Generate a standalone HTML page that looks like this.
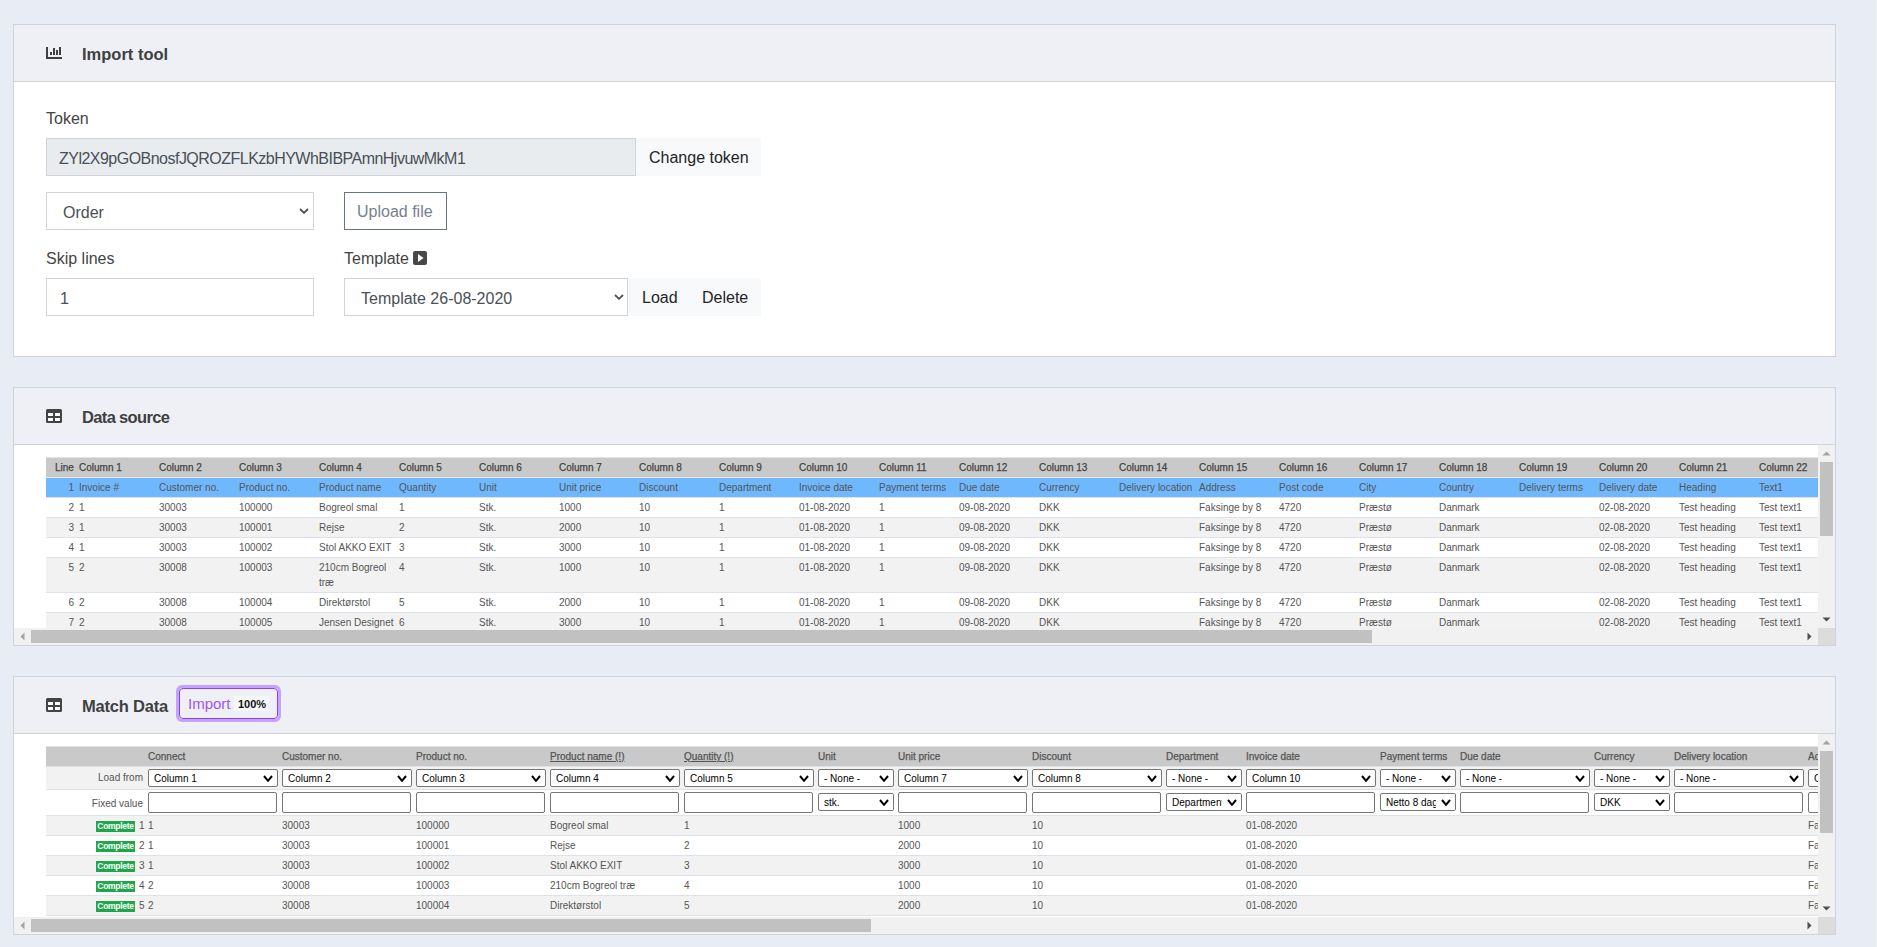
<!DOCTYPE html><html><head><meta charset="utf-8"><style>
*{margin:0;padding:0;box-sizing:border-box}
html,body{width:1877px;height:947px;overflow:hidden;background:#e8ecf4;font-family:"Liberation Sans",sans-serif;color:#333}
div{position:absolute}
.t{white-space:nowrap;line-height:15px;font-size:10px;color:#555}
.f{white-space:nowrap;font-size:16px;line-height:20px;color:#495057}
.card{background:#fff;border:1px solid #d2d3d6}
.ch{background:#eff0f5;border-bottom:1px solid #d2d3d6}
.ht{font-weight:bold;font-size:16.5px;line-height:20px;color:#404040;white-space:nowrap}
.sel{background:#fff;border:1px solid #767676;border-radius:2px}
.inp{background:#fff;border:1px solid #767676;border-radius:2px}
.st{white-space:nowrap;font-size:10px;line-height:14px;color:#000}
</style></head><body><div class="card" style="left:13px;top:24px;width:1823px;height:333px;"></div>
<div class="ch" style="left:14px;top:25px;width:1821px;height:57px;"></div>
<svg style="position:absolute;left:46px;top:47px" width="16" height="12" viewBox="0 0 16 12"><rect x="0" y="0" width="2" height="12" fill="#404040"/><rect x="0" y="10" width="16" height="2" fill="#404040"/><rect x="4" y="5" width="2" height="3" fill="#404040"/><rect x="7" y="1" width="2" height="7" fill="#404040"/><rect x="10" y="3" width="2" height="5" fill="#404040"/><rect x="13" y="0" width="2" height="8" fill="#404040"/></svg>
<div class="ht" style="left:82px;top:44px;">Import tool</div>
<div class="f" style="left:46px;top:109px;color:#444">Token</div>
<div style="left:46px;top:138px;width:590px;height:38px;background:#e9ecef;border:1px solid #ced4da"></div>
<div class="f" style="left:59px;top:149px;letter-spacing:-0.52px">ZYl2X9pGOBnosfJQROZFLKzbHYWhBIBPAmnHjvuwMkM1</div>
<div style="left:636px;top:138px;width:125px;height:38px;background:#f8f9fa"></div>
<div class="f" style="left:649px;top:148px;color:#212529">Change token</div>
<div style="left:46px;top:192px;width:268px;height:38px;background:#fff;border:1px solid #ced4da"></div>
<div class="f" style="left:63px;top:203px;">Order</div>
<svg style="position:absolute;left:299px;top:208px" width="10" height="6" viewBox="0 0 10 6"><polyline points="1,1 5.0,4.8 9,1" fill="none" stroke="#495057" stroke-width="1.8"/></svg>
<div style="left:344px;top:192px;width:103px;height:38px;background:#fff;border:1px solid #687389"></div>
<div class="f" style="left:357px;top:202px;color:#77808f">Upload file</div>
<div class="f" style="left:46px;top:249px;color:#444">Skip lines</div>
<div style="left:46px;top:278px;width:268px;height:38px;background:#fff;border:1px solid #ced4da"></div>
<div class="f" style="left:60px;top:289px;">1</div>
<div class="f" style="left:344px;top:249px;color:#444">Template</div>
<svg style="position:absolute;left:413px;top:251px" width="14" height="14" viewBox="0 0 14 14"><rect x="0" y="0" width="14" height="14" rx="2" fill="#474747"/><polygon points="5,3 10.5,7 5,11" fill="#fff"/></svg>
<div style="left:344px;top:278px;width:284px;height:38px;background:#fff;border:1px solid #ced4da"></div>
<div class="f" style="left:361px;top:289px;">Template 26-08-2020</div>
<svg style="position:absolute;left:614px;top:294px" width="10" height="6" viewBox="0 0 10 6"><polyline points="1,1 5.0,4.8 9,1" fill="none" stroke="#495057" stroke-width="1.8"/></svg>
<div style="left:628px;top:278px;width:133px;height:38px;background:#f8f9fa"></div>
<div class="f" style="left:642px;top:288px;color:#212529">Load</div>
<div class="f" style="left:702px;top:288px;color:#212529">Delete</div>
<div class="card" style="left:13px;top:387px;width:1823px;height:259px;"></div>
<div class="ch" style="left:14px;top:388px;width:1821px;height:57px;"></div>
<svg style="position:absolute;left:46px;top:409px" width="16" height="14" viewBox="0 0 16 14"><rect x="0" y="0" width="16" height="14" rx="1.5" fill="#444"/><rect x="2" y="4" width="5" height="3" fill="#fff"/><rect x="9" y="4" width="5" height="3" fill="#fff"/><rect x="2" y="9" width="5" height="3" fill="#fff"/><rect x="9" y="9" width="5" height="3" fill="#fff"/></svg>
<div class="ht" style="left:82px;top:407px;letter-spacing:-0.65px">Data source</div>
<div style="left:14px;top:445px;width:1804px;height:183px;overflow:hidden;background:#fff">
<div style="left:32px;top:13px;width:1972px;height:19px;background:#c9c9c9"></div>
<div style="left:32px;top:32px;width:1972px;height:1px;background:#e4e6e9"></div>
<div style="left:32px;top:33px;width:1972px;height:19px;background:#6fb8fd"></div>
<div style="left:32px;top:52px;width:1972px;height:1px;background:#dee2e6"></div>
<div style="left:32px;top:53px;width:1972px;height:19px;background:#fff"></div>
<div style="left:32px;top:72px;width:1972px;height:1px;background:#dee2e6"></div>
<div style="left:32px;top:73px;width:1972px;height:19px;background:#f2f2f2"></div>
<div style="left:32px;top:92px;width:1972px;height:1px;background:#dee2e6"></div>
<div style="left:32px;top:93px;width:1972px;height:19px;background:#fff"></div>
<div style="left:32px;top:112px;width:1972px;height:1px;background:#dee2e6"></div>
<div style="left:32px;top:113px;width:1972px;height:34px;background:#f2f2f2"></div>
<div style="left:32px;top:147px;width:1972px;height:1px;background:#dee2e6"></div>
<div style="left:32px;top:148px;width:1972px;height:19px;background:#fff"></div>
<div style="left:32px;top:167px;width:1972px;height:1px;background:#dee2e6"></div>
<div style="left:32px;top:168px;width:1972px;height:19px;background:#f2f2f2"></div>
<div style="left:32px;top:187px;width:1972px;height:1px;background:#dee2e6"></div>
<div style="left:32px;top:12px;width:1972px;height:1px;background:#dfe2e6"></div>
<div class="t" style="left:41px;top:15px;color:#444;-webkit-text-stroke:0.25px #444">Line</div>
<div class="t" style="left:65px;top:15px;color:#444;-webkit-text-stroke:0.25px #444">Column 1</div>
<div class="t" style="left:145px;top:15px;color:#444;-webkit-text-stroke:0.25px #444">Column 2</div>
<div class="t" style="left:225px;top:15px;color:#444;-webkit-text-stroke:0.25px #444">Column 3</div>
<div class="t" style="left:305px;top:15px;color:#444;-webkit-text-stroke:0.25px #444">Column 4</div>
<div class="t" style="left:385px;top:15px;color:#444;-webkit-text-stroke:0.25px #444">Column 5</div>
<div class="t" style="left:465px;top:15px;color:#444;-webkit-text-stroke:0.25px #444">Column 6</div>
<div class="t" style="left:545px;top:15px;color:#444;-webkit-text-stroke:0.25px #444">Column 7</div>
<div class="t" style="left:625px;top:15px;color:#444;-webkit-text-stroke:0.25px #444">Column 8</div>
<div class="t" style="left:705px;top:15px;color:#444;-webkit-text-stroke:0.25px #444">Column 9</div>
<div class="t" style="left:785px;top:15px;color:#444;-webkit-text-stroke:0.25px #444">Column 10</div>
<div class="t" style="left:865px;top:15px;color:#444;-webkit-text-stroke:0.25px #444">Column 11</div>
<div class="t" style="left:945px;top:15px;color:#444;-webkit-text-stroke:0.25px #444">Column 12</div>
<div class="t" style="left:1025px;top:15px;color:#444;-webkit-text-stroke:0.25px #444">Column 13</div>
<div class="t" style="left:1105px;top:15px;color:#444;-webkit-text-stroke:0.25px #444">Column 14</div>
<div class="t" style="left:1185px;top:15px;color:#444;-webkit-text-stroke:0.25px #444">Column 15</div>
<div class="t" style="left:1265px;top:15px;color:#444;-webkit-text-stroke:0.25px #444">Column 16</div>
<div class="t" style="left:1345px;top:15px;color:#444;-webkit-text-stroke:0.25px #444">Column 17</div>
<div class="t" style="left:1425px;top:15px;color:#444;-webkit-text-stroke:0.25px #444">Column 18</div>
<div class="t" style="left:1505px;top:15px;color:#444;-webkit-text-stroke:0.25px #444">Column 19</div>
<div class="t" style="left:1585px;top:15px;color:#444;-webkit-text-stroke:0.25px #444">Column 20</div>
<div class="t" style="left:1665px;top:15px;color:#444;-webkit-text-stroke:0.25px #444">Column 21</div>
<div class="t" style="left:1745px;top:15px;color:#444;-webkit-text-stroke:0.25px #444">Column 22</div>
<div class="t" style="left:1825px;top:15px;color:#444;-webkit-text-stroke:0.25px #444">Column 23</div>
<div class="t" style="left:32px;top:35px;width:28px;text-align:right">1</div>
<div class="t" style="left:65px;top:35px;">Invoice #</div>
<div class="t" style="left:145px;top:35px;">Customer no.</div>
<div class="t" style="left:225px;top:35px;">Product no.</div>
<div class="t" style="left:305px;top:35px;">Product name</div>
<div class="t" style="left:385px;top:35px;">Quantity</div>
<div class="t" style="left:465px;top:35px;">Unit</div>
<div class="t" style="left:545px;top:35px;">Unit price</div>
<div class="t" style="left:625px;top:35px;">Discount</div>
<div class="t" style="left:705px;top:35px;">Department</div>
<div class="t" style="left:785px;top:35px;">Invoice date</div>
<div class="t" style="left:865px;top:35px;">Payment terms</div>
<div class="t" style="left:945px;top:35px;">Due date</div>
<div class="t" style="left:1025px;top:35px;">Currency</div>
<div class="t" style="left:1105px;top:35px;">Delivery location</div>
<div class="t" style="left:1185px;top:35px;">Address</div>
<div class="t" style="left:1265px;top:35px;">Post code</div>
<div class="t" style="left:1345px;top:35px;">City</div>
<div class="t" style="left:1425px;top:35px;">Country</div>
<div class="t" style="left:1505px;top:35px;">Delivery terms</div>
<div class="t" style="left:1585px;top:35px;">Delivery date</div>
<div class="t" style="left:1665px;top:35px;">Heading</div>
<div class="t" style="left:1745px;top:35px;">Text1</div>
<div class="t" style="left:1825px;top:35px;">Text2</div>
<div class="t" style="left:32px;top:55px;width:28px;text-align:right">2</div>
<div class="t" style="left:65px;top:55px;">1</div>
<div class="t" style="left:145px;top:55px;">30003</div>
<div class="t" style="left:225px;top:55px;">100000</div>
<div class="t" style="left:305px;top:55px;">Bogreol smal</div>
<div class="t" style="left:385px;top:55px;">1</div>
<div class="t" style="left:465px;top:55px;">Stk.</div>
<div class="t" style="left:545px;top:55px;">1000</div>
<div class="t" style="left:625px;top:55px;">10</div>
<div class="t" style="left:705px;top:55px;">1</div>
<div class="t" style="left:785px;top:55px;">01-08-2020</div>
<div class="t" style="left:865px;top:55px;">1</div>
<div class="t" style="left:945px;top:55px;">09-08-2020</div>
<div class="t" style="left:1025px;top:55px;">DKK</div>
<div class="t" style="left:1185px;top:55px;">Faksinge by 8</div>
<div class="t" style="left:1265px;top:55px;">4720</div>
<div class="t" style="left:1345px;top:55px;">Præstø</div>
<div class="t" style="left:1425px;top:55px;">Danmark</div>
<div class="t" style="left:1585px;top:55px;">02-08-2020</div>
<div class="t" style="left:1665px;top:55px;">Test heading</div>
<div class="t" style="left:1745px;top:55px;">Test text1</div>
<div class="t" style="left:32px;top:75px;width:28px;text-align:right">3</div>
<div class="t" style="left:65px;top:75px;">1</div>
<div class="t" style="left:145px;top:75px;">30003</div>
<div class="t" style="left:225px;top:75px;">100001</div>
<div class="t" style="left:305px;top:75px;">Rejse</div>
<div class="t" style="left:385px;top:75px;">2</div>
<div class="t" style="left:465px;top:75px;">Stk.</div>
<div class="t" style="left:545px;top:75px;">2000</div>
<div class="t" style="left:625px;top:75px;">10</div>
<div class="t" style="left:705px;top:75px;">1</div>
<div class="t" style="left:785px;top:75px;">01-08-2020</div>
<div class="t" style="left:865px;top:75px;">1</div>
<div class="t" style="left:945px;top:75px;">09-08-2020</div>
<div class="t" style="left:1025px;top:75px;">DKK</div>
<div class="t" style="left:1185px;top:75px;">Faksinge by 8</div>
<div class="t" style="left:1265px;top:75px;">4720</div>
<div class="t" style="left:1345px;top:75px;">Præstø</div>
<div class="t" style="left:1425px;top:75px;">Danmark</div>
<div class="t" style="left:1585px;top:75px;">02-08-2020</div>
<div class="t" style="left:1665px;top:75px;">Test heading</div>
<div class="t" style="left:1745px;top:75px;">Test text1</div>
<div class="t" style="left:32px;top:95px;width:28px;text-align:right">4</div>
<div class="t" style="left:65px;top:95px;">1</div>
<div class="t" style="left:145px;top:95px;">30003</div>
<div class="t" style="left:225px;top:95px;">100002</div>
<div class="t" style="left:305px;top:95px;">Stol AKKO EXIT</div>
<div class="t" style="left:385px;top:95px;">3</div>
<div class="t" style="left:465px;top:95px;">Stk.</div>
<div class="t" style="left:545px;top:95px;">3000</div>
<div class="t" style="left:625px;top:95px;">10</div>
<div class="t" style="left:705px;top:95px;">1</div>
<div class="t" style="left:785px;top:95px;">01-08-2020</div>
<div class="t" style="left:865px;top:95px;">1</div>
<div class="t" style="left:945px;top:95px;">09-08-2020</div>
<div class="t" style="left:1025px;top:95px;">DKK</div>
<div class="t" style="left:1185px;top:95px;">Faksinge by 8</div>
<div class="t" style="left:1265px;top:95px;">4720</div>
<div class="t" style="left:1345px;top:95px;">Præstø</div>
<div class="t" style="left:1425px;top:95px;">Danmark</div>
<div class="t" style="left:1585px;top:95px;">02-08-2020</div>
<div class="t" style="left:1665px;top:95px;">Test heading</div>
<div class="t" style="left:1745px;top:95px;">Test text1</div>
<div class="t" style="left:32px;top:115px;width:28px;text-align:right">5</div>
<div class="t" style="left:65px;top:115px;">2</div>
<div class="t" style="left:145px;top:115px;">30008</div>
<div class="t" style="left:225px;top:115px;">100003</div>
<div class="t" style="left:305px;top:115px;">210cm Bogreol<br>træ</div>
<div class="t" style="left:385px;top:115px;">4</div>
<div class="t" style="left:465px;top:115px;">Stk.</div>
<div class="t" style="left:545px;top:115px;">1000</div>
<div class="t" style="left:625px;top:115px;">10</div>
<div class="t" style="left:705px;top:115px;">1</div>
<div class="t" style="left:785px;top:115px;">01-08-2020</div>
<div class="t" style="left:865px;top:115px;">1</div>
<div class="t" style="left:945px;top:115px;">09-08-2020</div>
<div class="t" style="left:1025px;top:115px;">DKK</div>
<div class="t" style="left:1185px;top:115px;">Faksinge by 8</div>
<div class="t" style="left:1265px;top:115px;">4720</div>
<div class="t" style="left:1345px;top:115px;">Præstø</div>
<div class="t" style="left:1425px;top:115px;">Danmark</div>
<div class="t" style="left:1585px;top:115px;">02-08-2020</div>
<div class="t" style="left:1665px;top:115px;">Test heading</div>
<div class="t" style="left:1745px;top:115px;">Test text1</div>
<div class="t" style="left:32px;top:150px;width:28px;text-align:right">6</div>
<div class="t" style="left:65px;top:150px;">2</div>
<div class="t" style="left:145px;top:150px;">30008</div>
<div class="t" style="left:225px;top:150px;">100004</div>
<div class="t" style="left:305px;top:150px;">Direktørstol</div>
<div class="t" style="left:385px;top:150px;">5</div>
<div class="t" style="left:465px;top:150px;">Stk.</div>
<div class="t" style="left:545px;top:150px;">2000</div>
<div class="t" style="left:625px;top:150px;">10</div>
<div class="t" style="left:705px;top:150px;">1</div>
<div class="t" style="left:785px;top:150px;">01-08-2020</div>
<div class="t" style="left:865px;top:150px;">1</div>
<div class="t" style="left:945px;top:150px;">09-08-2020</div>
<div class="t" style="left:1025px;top:150px;">DKK</div>
<div class="t" style="left:1185px;top:150px;">Faksinge by 8</div>
<div class="t" style="left:1265px;top:150px;">4720</div>
<div class="t" style="left:1345px;top:150px;">Præstø</div>
<div class="t" style="left:1425px;top:150px;">Danmark</div>
<div class="t" style="left:1585px;top:150px;">02-08-2020</div>
<div class="t" style="left:1665px;top:150px;">Test heading</div>
<div class="t" style="left:1745px;top:150px;">Test text1</div>
<div class="t" style="left:32px;top:170px;width:28px;text-align:right">7</div>
<div class="t" style="left:65px;top:170px;">2</div>
<div class="t" style="left:145px;top:170px;">30008</div>
<div class="t" style="left:225px;top:170px;">100005</div>
<div class="t" style="left:305px;top:170px;">Jensen Designet</div>
<div class="t" style="left:385px;top:170px;">6</div>
<div class="t" style="left:465px;top:170px;">Stk.</div>
<div class="t" style="left:545px;top:170px;">3000</div>
<div class="t" style="left:625px;top:170px;">10</div>
<div class="t" style="left:705px;top:170px;">1</div>
<div class="t" style="left:785px;top:170px;">01-08-2020</div>
<div class="t" style="left:865px;top:170px;">1</div>
<div class="t" style="left:945px;top:170px;">09-08-2020</div>
<div class="t" style="left:1025px;top:170px;">DKK</div>
<div class="t" style="left:1185px;top:170px;">Faksinge by 8</div>
<div class="t" style="left:1265px;top:170px;">4720</div>
<div class="t" style="left:1345px;top:170px;">Præstø</div>
<div class="t" style="left:1425px;top:170px;">Danmark</div>
<div class="t" style="left:1585px;top:170px;">02-08-2020</div>
<div class="t" style="left:1665px;top:170px;">Test heading</div>
<div class="t" style="left:1745px;top:170px;">Test text1</div>
</div>
<div style="left:1818px;top:445px;width:17px;height:183px;background:#f1f1f1"></div>
<svg style="position:absolute;left:1818px;top:445px" width="17" height="17"><polygon points="4.5,10.5 8.5,6.5 12.5,10.5" fill="#a3a3a3"/></svg>
<svg style="position:absolute;left:1818px;top:611px" width="17" height="17"><polygon points="4.5,6.5 8.5,10.5 12.5,6.5" fill="#505050"/></svg>
<div style="left:1820px;top:462px;width:13px;height:74px;background:#c1c1c1"></div>
<div style="left:14px;top:628px;width:1804px;height:17px;background:#f1f1f1"></div>
<svg style="position:absolute;left:14px;top:628px" width="17" height="17"><polygon points="10.5,4.5 6.5,8.5 10.5,12.5" fill="#a3a3a3"/></svg>
<svg style="position:absolute;left:1801px;top:628px" width="17" height="17"><polygon points="6.5,4.5 10.5,8.5 6.5,12.5" fill="#505050"/></svg>
<div style="left:31px;top:630px;width:1341px;height:13px;background:#c1c1c1"></div>
<div style="left:1818px;top:628px;width:17px;height:17px;background:#dcdcdc"></div>
<div class="card" style="left:13px;top:676px;width:1823px;height:259px;"></div>
<div class="ch" style="left:14px;top:677px;width:1821px;height:57px;"></div>
<svg style="position:absolute;left:46px;top:698px" width="16" height="14" viewBox="0 0 16 14"><rect x="0" y="0" width="16" height="14" rx="1.5" fill="#444"/><rect x="2" y="4" width="5" height="3" fill="#fff"/><rect x="9" y="4" width="5" height="3" fill="#fff"/><rect x="2" y="9" width="5" height="3" fill="#fff"/><rect x="9" y="9" width="5" height="3" fill="#fff"/></svg>
<div class="ht" style="left:82px;top:696px;letter-spacing:-0.2px">Match Data</div>
<div style="left:176px;top:685px;width:105px;height:37px;border:3px solid #c6a3fb;border-radius:6px"></div>
<div style="left:179px;top:688px;width:99px;height:31px;border:1.5px solid #8a3ffc;border-radius:4px"></div>
<div class="f" style="left:188px;top:694px;font-size:15px;color:#9d55f5">Import</div>
<div style="left:234px;top:696px;width:35px;height:15px;background:#f5f6f8"></div>
<div class="t" style="left:238px;top:698px;font-size:11px;font-weight:bold;color:#111;line-height:13px">100%</div>
<div style="left:14px;top:734px;width:1804px;height:183px;overflow:hidden;background:#fff">
<div style="left:32px;top:13px;width:1972px;height:19px;background:#c9c9c9"></div>
<div style="left:32px;top:32px;width:1972px;height:1px;background:#dee2e6"></div>
<div style="left:32px;top:33px;width:1972px;height:22px;background:#f2f2f2"></div>
<div style="left:32px;top:55px;width:1972px;height:1px;background:#dee2e6"></div>
<div style="left:32px;top:56px;width:1972px;height:25px;background:#fff"></div>
<div style="left:32px;top:81px;width:1972px;height:1px;background:#dee2e6"></div>
<div style="left:32px;top:82px;width:1972px;height:19px;background:#f2f2f2"></div>
<div style="left:32px;top:101px;width:1972px;height:1px;background:#dee2e6"></div>
<div style="left:32px;top:102px;width:1972px;height:19px;background:#fff"></div>
<div style="left:32px;top:121px;width:1972px;height:1px;background:#dee2e6"></div>
<div style="left:32px;top:122px;width:1972px;height:19px;background:#f2f2f2"></div>
<div style="left:32px;top:141px;width:1972px;height:1px;background:#dee2e6"></div>
<div style="left:32px;top:142px;width:1972px;height:19px;background:#fff"></div>
<div style="left:32px;top:161px;width:1972px;height:1px;background:#dee2e6"></div>
<div style="left:32px;top:162px;width:1972px;height:19px;background:#f2f2f2"></div>
<div style="left:32px;top:181px;width:1972px;height:1px;background:#dee2e6"></div>
<div style="left:32px;top:12px;width:1972px;height:1px;background:#dfe2e6"></div>
<div class="t" style="left:32px;top:36px;width:97px;text-align:right">Load from</div>
<div class="t" style="left:32px;top:62px;width:97px;text-align:right">Fixed value</div>
<div class="t" style="left:134px;top:15px;color:#555;-webkit-text-stroke:0.25px #555">Connect</div>
<div class="sel" style="left:134px;top:35px;width:130px;height:18px;overflow:hidden"><div class="st" style="left:5px;top:2px">Column 1</div></div>
<svg style="position:absolute;left:249px;top:41px" width="10" height="7" viewBox="0 0 10 7"><polyline points="1,1 5.0,5.8 9,1" fill="none" stroke="#000" stroke-width="2"/></svg>
<div class="inp" style="left:134px;top:58px;width:129px;height:21px"></div>
<div class="t" style="left:134px;top:84px;">1</div>
<div class="t" style="left:134px;top:104px;">1</div>
<div class="t" style="left:134px;top:124px;">1</div>
<div class="t" style="left:134px;top:144px;">2</div>
<div class="t" style="left:134px;top:164px;">2</div>
<div class="t" style="left:268px;top:15px;color:#555;-webkit-text-stroke:0.25px #555">Customer no.</div>
<div class="sel" style="left:268px;top:35px;width:130px;height:18px;overflow:hidden"><div class="st" style="left:5px;top:2px">Column 2</div></div>
<svg style="position:absolute;left:383px;top:41px" width="10" height="7" viewBox="0 0 10 7"><polyline points="1,1 5.0,5.8 9,1" fill="none" stroke="#000" stroke-width="2"/></svg>
<div class="inp" style="left:268px;top:58px;width:129px;height:21px"></div>
<div class="t" style="left:268px;top:84px;">30003</div>
<div class="t" style="left:268px;top:104px;">30003</div>
<div class="t" style="left:268px;top:124px;">30003</div>
<div class="t" style="left:268px;top:144px;">30008</div>
<div class="t" style="left:268px;top:164px;">30008</div>
<div class="t" style="left:402px;top:15px;color:#555;-webkit-text-stroke:0.25px #555">Product no.</div>
<div class="sel" style="left:402px;top:35px;width:130px;height:18px;overflow:hidden"><div class="st" style="left:5px;top:2px">Column 3</div></div>
<svg style="position:absolute;left:517px;top:41px" width="10" height="7" viewBox="0 0 10 7"><polyline points="1,1 5.0,5.8 9,1" fill="none" stroke="#000" stroke-width="2"/></svg>
<div class="inp" style="left:402px;top:58px;width:129px;height:21px"></div>
<div class="t" style="left:402px;top:84px;">100000</div>
<div class="t" style="left:402px;top:104px;">100001</div>
<div class="t" style="left:402px;top:124px;">100002</div>
<div class="t" style="left:402px;top:144px;">100003</div>
<div class="t" style="left:402px;top:164px;">100004</div>
<div class="t" style="left:536px;top:15px;color:#555;-webkit-text-stroke:0.25px #555;text-decoration:underline">Product name (!)</div>
<div class="sel" style="left:536px;top:35px;width:130px;height:18px;overflow:hidden"><div class="st" style="left:5px;top:2px">Column 4</div></div>
<svg style="position:absolute;left:651px;top:41px" width="10" height="7" viewBox="0 0 10 7"><polyline points="1,1 5.0,5.8 9,1" fill="none" stroke="#000" stroke-width="2"/></svg>
<div class="inp" style="left:536px;top:58px;width:129px;height:21px"></div>
<div class="t" style="left:536px;top:84px;">Bogreol smal</div>
<div class="t" style="left:536px;top:104px;">Rejse</div>
<div class="t" style="left:536px;top:124px;">Stol AKKO EXIT</div>
<div class="t" style="left:536px;top:144px;">210cm Bogreol træ</div>
<div class="t" style="left:536px;top:164px;">Direktørstol</div>
<div class="t" style="left:670px;top:15px;color:#555;-webkit-text-stroke:0.25px #555;text-decoration:underline">Quantity (!)</div>
<div class="sel" style="left:670px;top:35px;width:130px;height:18px;overflow:hidden"><div class="st" style="left:5px;top:2px">Column 5</div></div>
<svg style="position:absolute;left:785px;top:41px" width="10" height="7" viewBox="0 0 10 7"><polyline points="1,1 5.0,5.8 9,1" fill="none" stroke="#000" stroke-width="2"/></svg>
<div class="inp" style="left:670px;top:58px;width:129px;height:21px"></div>
<div class="t" style="left:670px;top:84px;">1</div>
<div class="t" style="left:670px;top:104px;">2</div>
<div class="t" style="left:670px;top:124px;">3</div>
<div class="t" style="left:670px;top:144px;">4</div>
<div class="t" style="left:670px;top:164px;">5</div>
<div class="t" style="left:804px;top:15px;color:#555;-webkit-text-stroke:0.25px #555">Unit</div>
<div class="sel" style="left:804px;top:35px;width:76px;height:18px;overflow:hidden"><div class="st" style="left:5px;top:2px">- None -</div></div>
<svg style="position:absolute;left:865px;top:41px" width="10" height="7" viewBox="0 0 10 7"><polyline points="1,1 5.0,5.8 9,1" fill="none" stroke="#000" stroke-width="2"/></svg>
<div class="sel" style="left:804px;top:59px;width:76px;height:18px;overflow:hidden"><div class="st" style="left:5px;top:2px">stk.</div><div style="right:0;top:0;width:19px;height:16px;background:#fff"></div></div>
<svg style="position:absolute;left:865px;top:65px" width="10" height="7" viewBox="0 0 10 7"><polyline points="1,1 5.0,5.8 9,1" fill="none" stroke="#000" stroke-width="2"/></svg>
<div class="t" style="left:884px;top:15px;color:#555;-webkit-text-stroke:0.25px #555">Unit price</div>
<div class="sel" style="left:884px;top:35px;width:130px;height:18px;overflow:hidden"><div class="st" style="left:5px;top:2px">Column 7</div></div>
<svg style="position:absolute;left:999px;top:41px" width="10" height="7" viewBox="0 0 10 7"><polyline points="1,1 5.0,5.8 9,1" fill="none" stroke="#000" stroke-width="2"/></svg>
<div class="inp" style="left:884px;top:58px;width:129px;height:21px"></div>
<div class="t" style="left:884px;top:84px;">1000</div>
<div class="t" style="left:884px;top:104px;">2000</div>
<div class="t" style="left:884px;top:124px;">3000</div>
<div class="t" style="left:884px;top:144px;">1000</div>
<div class="t" style="left:884px;top:164px;">2000</div>
<div class="t" style="left:1018px;top:15px;color:#555;-webkit-text-stroke:0.25px #555">Discount</div>
<div class="sel" style="left:1018px;top:35px;width:130px;height:18px;overflow:hidden"><div class="st" style="left:5px;top:2px">Column 8</div></div>
<svg style="position:absolute;left:1133px;top:41px" width="10" height="7" viewBox="0 0 10 7"><polyline points="1,1 5.0,5.8 9,1" fill="none" stroke="#000" stroke-width="2"/></svg>
<div class="inp" style="left:1018px;top:58px;width:129px;height:21px"></div>
<div class="t" style="left:1018px;top:84px;">10</div>
<div class="t" style="left:1018px;top:104px;">10</div>
<div class="t" style="left:1018px;top:124px;">10</div>
<div class="t" style="left:1018px;top:144px;">10</div>
<div class="t" style="left:1018px;top:164px;">10</div>
<div class="t" style="left:1152px;top:15px;color:#555;-webkit-text-stroke:0.25px #555">Department</div>
<div class="sel" style="left:1152px;top:35px;width:76px;height:18px;overflow:hidden"><div class="st" style="left:5px;top:2px">- None -</div></div>
<svg style="position:absolute;left:1213px;top:41px" width="10" height="7" viewBox="0 0 10 7"><polyline points="1,1 5.0,5.8 9,1" fill="none" stroke="#000" stroke-width="2"/></svg>
<div class="sel" style="left:1152px;top:59px;width:76px;height:18px;overflow:hidden"><div class="st" style="left:5px;top:2px">Department</div><div style="right:0;top:0;width:19px;height:16px;background:#fff"></div></div>
<svg style="position:absolute;left:1213px;top:65px" width="10" height="7" viewBox="0 0 10 7"><polyline points="1,1 5.0,5.8 9,1" fill="none" stroke="#000" stroke-width="2"/></svg>
<div class="t" style="left:1232px;top:15px;color:#555;-webkit-text-stroke:0.25px #555">Invoice date</div>
<div class="sel" style="left:1232px;top:35px;width:130px;height:18px;overflow:hidden"><div class="st" style="left:5px;top:2px">Column 10</div></div>
<svg style="position:absolute;left:1347px;top:41px" width="10" height="7" viewBox="0 0 10 7"><polyline points="1,1 5.0,5.8 9,1" fill="none" stroke="#000" stroke-width="2"/></svg>
<div class="inp" style="left:1232px;top:58px;width:129px;height:21px"></div>
<div class="t" style="left:1232px;top:84px;">01-08-2020</div>
<div class="t" style="left:1232px;top:104px;">01-08-2020</div>
<div class="t" style="left:1232px;top:124px;">01-08-2020</div>
<div class="t" style="left:1232px;top:144px;">01-08-2020</div>
<div class="t" style="left:1232px;top:164px;">01-08-2020</div>
<div class="t" style="left:1366px;top:15px;color:#555;-webkit-text-stroke:0.25px #555">Payment terms</div>
<div class="sel" style="left:1366px;top:35px;width:76px;height:18px;overflow:hidden"><div class="st" style="left:5px;top:2px">- None -</div></div>
<svg style="position:absolute;left:1427px;top:41px" width="10" height="7" viewBox="0 0 10 7"><polyline points="1,1 5.0,5.8 9,1" fill="none" stroke="#000" stroke-width="2"/></svg>
<div class="sel" style="left:1366px;top:59px;width:76px;height:18px;overflow:hidden"><div class="st" style="left:5px;top:2px">Netto 8 dage</div><div style="right:0;top:0;width:19px;height:16px;background:#fff"></div></div>
<svg style="position:absolute;left:1427px;top:65px" width="10" height="7" viewBox="0 0 10 7"><polyline points="1,1 5.0,5.8 9,1" fill="none" stroke="#000" stroke-width="2"/></svg>
<div class="t" style="left:1446px;top:15px;color:#555;-webkit-text-stroke:0.25px #555">Due date</div>
<div class="sel" style="left:1446px;top:35px;width:130px;height:18px;overflow:hidden"><div class="st" style="left:5px;top:2px">- None -</div></div>
<svg style="position:absolute;left:1561px;top:41px" width="10" height="7" viewBox="0 0 10 7"><polyline points="1,1 5.0,5.8 9,1" fill="none" stroke="#000" stroke-width="2"/></svg>
<div class="inp" style="left:1446px;top:58px;width:129px;height:21px"></div>
<div class="t" style="left:1580px;top:15px;color:#555;-webkit-text-stroke:0.25px #555">Currency</div>
<div class="sel" style="left:1580px;top:35px;width:76px;height:18px;overflow:hidden"><div class="st" style="left:5px;top:2px">- None -</div></div>
<svg style="position:absolute;left:1641px;top:41px" width="10" height="7" viewBox="0 0 10 7"><polyline points="1,1 5.0,5.8 9,1" fill="none" stroke="#000" stroke-width="2"/></svg>
<div class="sel" style="left:1580px;top:59px;width:76px;height:18px;overflow:hidden"><div class="st" style="left:5px;top:2px">DKK</div><div style="right:0;top:0;width:19px;height:16px;background:#fff"></div></div>
<svg style="position:absolute;left:1641px;top:65px" width="10" height="7" viewBox="0 0 10 7"><polyline points="1,1 5.0,5.8 9,1" fill="none" stroke="#000" stroke-width="2"/></svg>
<div class="t" style="left:1660px;top:15px;color:#555;-webkit-text-stroke:0.25px #555">Delivery location</div>
<div class="sel" style="left:1660px;top:35px;width:130px;height:18px;overflow:hidden"><div class="st" style="left:5px;top:2px">- None -</div></div>
<svg style="position:absolute;left:1775px;top:41px" width="10" height="7" viewBox="0 0 10 7"><polyline points="1,1 5.0,5.8 9,1" fill="none" stroke="#000" stroke-width="2"/></svg>
<div class="inp" style="left:1660px;top:58px;width:129px;height:21px"></div>
<div class="t" style="left:1794px;top:15px;color:#555;-webkit-text-stroke:0.25px #555">Address</div>
<div class="sel" style="left:1794px;top:35px;width:130px;height:18px;overflow:hidden"><div class="st" style="left:5px;top:2px">Column 15</div></div>
<svg style="position:absolute;left:1909px;top:41px" width="10" height="7" viewBox="0 0 10 7"><polyline points="1,1 5.0,5.8 9,1" fill="none" stroke="#000" stroke-width="2"/></svg>
<div class="inp" style="left:1794px;top:58px;width:129px;height:21px"></div>
<div class="t" style="left:1794px;top:84px;">Faksinge by 8</div>
<div class="t" style="left:1794px;top:104px;">Faksinge by 8</div>
<div class="t" style="left:1794px;top:124px;">Faksinge by 8</div>
<div class="t" style="left:1794px;top:144px;">Faksinge by 8</div>
<div class="t" style="left:1794px;top:164px;">Faksinge by 8</div>
<div style="left:82px;top:87px;width:39px;height:11px;background:#1ea748"></div>
<div class="t" style="left:82px;top:86px;width:39px;text-align:center;color:#fff;font-weight:bold;font-size:8.5px;line-height:13px;letter-spacing:-0.3px">Complete</div>
<div class="t" style="left:125px;top:84px;">1</div>
<div style="left:82px;top:107px;width:39px;height:11px;background:#1ea748"></div>
<div class="t" style="left:82px;top:106px;width:39px;text-align:center;color:#fff;font-weight:bold;font-size:8.5px;line-height:13px;letter-spacing:-0.3px">Complete</div>
<div class="t" style="left:125px;top:104px;">2</div>
<div style="left:82px;top:127px;width:39px;height:11px;background:#1ea748"></div>
<div class="t" style="left:82px;top:126px;width:39px;text-align:center;color:#fff;font-weight:bold;font-size:8.5px;line-height:13px;letter-spacing:-0.3px">Complete</div>
<div class="t" style="left:125px;top:124px;">3</div>
<div style="left:82px;top:147px;width:39px;height:11px;background:#1ea748"></div>
<div class="t" style="left:82px;top:146px;width:39px;text-align:center;color:#fff;font-weight:bold;font-size:8.5px;line-height:13px;letter-spacing:-0.3px">Complete</div>
<div class="t" style="left:125px;top:144px;">4</div>
<div style="left:82px;top:167px;width:39px;height:11px;background:#1ea748"></div>
<div class="t" style="left:82px;top:166px;width:39px;text-align:center;color:#fff;font-weight:bold;font-size:8.5px;line-height:13px;letter-spacing:-0.3px">Complete</div>
<div class="t" style="left:125px;top:164px;">5</div>
</div>
<div style="left:1818px;top:734px;width:17px;height:183px;background:#f1f1f1"></div>
<svg style="position:absolute;left:1818px;top:734px" width="17" height="17"><polygon points="4.5,10.5 8.5,6.5 12.5,10.5" fill="#a3a3a3"/></svg>
<svg style="position:absolute;left:1818px;top:900px" width="17" height="17"><polygon points="4.5,6.5 8.5,10.5 12.5,6.5" fill="#505050"/></svg>
<div style="left:1820px;top:751px;width:13px;height:82px;background:#c1c1c1"></div>
<div style="left:14px;top:917px;width:1804px;height:17px;background:#f1f1f1"></div>
<svg style="position:absolute;left:14px;top:917px" width="17" height="17"><polygon points="10.5,4.5 6.5,8.5 10.5,12.5" fill="#a3a3a3"/></svg>
<svg style="position:absolute;left:1801px;top:917px" width="17" height="17"><polygon points="6.5,4.5 10.5,8.5 6.5,12.5" fill="#505050"/></svg>
<div style="left:31px;top:919px;width:840px;height:13px;background:#c1c1c1"></div>
<div style="left:1818px;top:917px;width:17px;height:17px;background:#dcdcdc"></div>
<div style="left:1876px;top:0px;width:1px;height:947px;background:#f1f1f1"></div></body></html>
